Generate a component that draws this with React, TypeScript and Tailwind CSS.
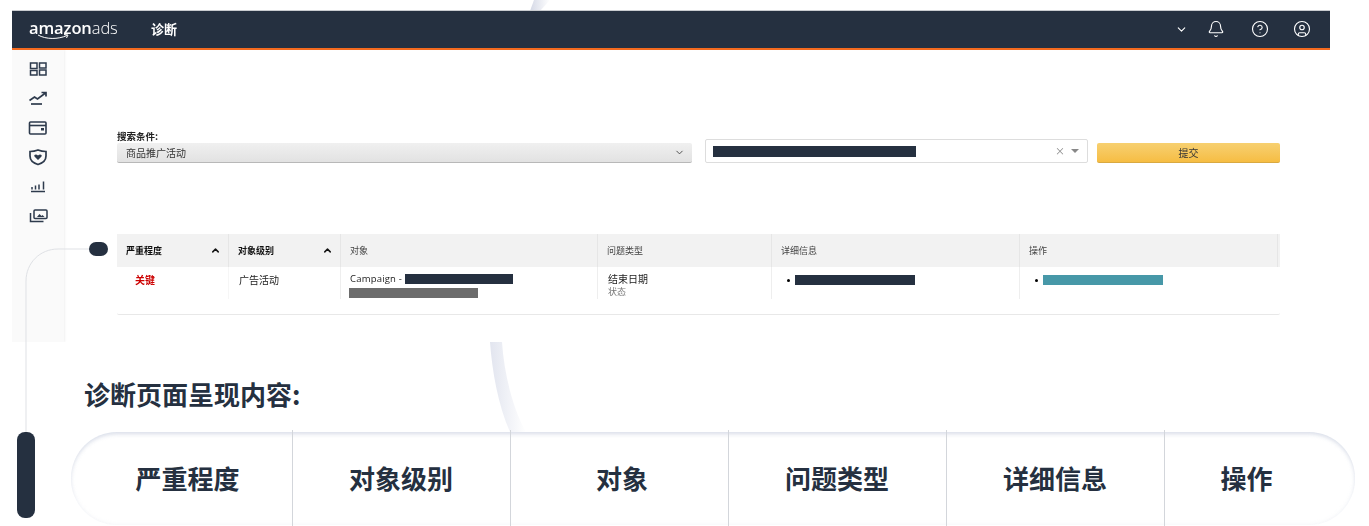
import { Bell, ChevronDown, ChevronUp, CircleHelp, CircleUser } from 'lucide-react'

const FONT = "font-['Noto_Sans_CJK_SC','Noto_Sans',sans-serif]"

const SUMMARY = [
  { label: '严重程度', cls: 'w-[221px] pl-[12px]' },
  { label: '对象级别', cls: 'w-[218px]' },
  { label: '对象', cls: 'w-[218px] pl-[6px]' },
  { label: '问题类型', cls: 'w-[218px]' },
  { label: '详细信息', cls: 'w-[218px]' },
  { label: '操作', cls: 'flex-1 pr-[26px]' },
]

function SideIcons() {
  const cls = 'w-[20px] h-[20px] text-[#2d3a4c]'
  return (
    <div className="flex flex-col items-center gap-[9.4px] pt-[9px]">
      <svg viewBox="0 0 20 20" fill="none" stroke="currentColor" strokeWidth="1.5" className={cls}>
        <rect x="2.500" y="4" width="6.500" height="5.500" />
        <rect x="2.500" y="11.500" width="6.500" height="4.500" />
        <rect x="11.500" y="4" width="6.500" height="5" />
        <rect x="11.500" y="11" width="6.500" height="5" />
      </svg>
      <svg viewBox="0 0 20 20" fill="none" stroke="currentColor" strokeWidth="1.700" className={cls}>
        <path d="M1.500 12.500l5-3.500 3 2 8-6M13.500 4.500h4.500v4" />
        <path d="M3 16h11" />
      </svg>
      <svg viewBox="0 0 20 20" fill="none" stroke="currentColor" strokeWidth="1.600" className={cls}>
        <rect x="1.500" y="4" width="16.500" height="12" rx="1" />
        <path d="M1.500 7.500h16.500" />
        <rect x="13" y="10" width="3" height="2.500" fill="currentColor" stroke="none" />
      </svg>
      <svg viewBox="0 0 20 20" fill="none" stroke="currentColor" strokeWidth="1.700" className={cls}>
        <path d="M2 4.500c3 0 5.500-.5 8-1.500 2.500 1 5 1.500 8 1.500v4.500c0 4-3 7-8 8.500-5-1.500-8-4.500-8-8.500z" />
        <path d="M10 13L6.500 9.500c-1-1.500 1.500-3 3.500-1 2-2 4.500-.5 3.500 1z" fill="currentColor" stroke="none" />
      </svg>
      <svg viewBox="0 0 20 20" fill="none" stroke="currentColor" strokeWidth="1.500" className={cls}>
        <path d="M4 12.500v-2.500M7.500 12.500v-4M11 12.500v-5M15.500 12.500v-8M3 14.500h14" />
      </svg>
      <svg viewBox="0 0 20 20" fill="none" stroke="currentColor" strokeWidth="1.500" className={cls}>
        <rect x="6" y="4" width="13" height="8.500" rx="1" />
        <path d="M2.500 7v8.500h13" />
        <path d="M9 11l2.500-3 2 2 1-1 2 2z" fill="currentColor" stroke="none" />
      </svg>
    </div>
  )
}

function Bar({ className }: { className: string }) {
  return <span className={`block h-[10px] ${className}`} />
}

function HeaderCell({ label, sort, dark }: { label: string; sort?: boolean; dark?: boolean }) {
  return (
    <div className={`flex items-center justify-between border-r border-[#e6e6e6] pl-[9px] pr-[7px] text-[9px] ${dark ? 'font-bold text-[#111]' : 'text-[#444]'}`}>
      <span>{label}</span>
      {sort && <ChevronUp size={11} strokeWidth={3.2} className="text-[#111]" />}
    </div>
  )
}

export default function App() {
  return (
    <div className={`relative w-[1369px] h-[526px] overflow-hidden bg-white ${FONT}`}>
      {/* background swooshes */}
      <svg className="absolute left-[480px] top-0 w-[80px] h-[12px]" viewBox="0 0 80 12">
        <defs>
          <linearGradient id="swooshTop" x1="0" x2="1" y1="0" y2="0">
            <stop offset="0" stopColor="#d5d9e6" />
            <stop offset="1" stopColor="#ffffff" />
          </linearGradient>
        </defs>
        <path d="M54 0h16l-10 11h-10z" fill="url(#swooshTop)" />
      </svg>
      <svg className="absolute left-[480px] top-[340px] w-[60px] h-[94px]" viewBox="0 0 60 94">
        <defs>
          <linearGradient id="swooshMid" x1="0" x2="1" y1="0" y2="0">
            <stop offset="0" stopColor="#e2e5ef" />
            <stop offset="1" stopColor="#ffffff" />
          </linearGradient>
        </defs>
        <path d="M10 2h12c2 30 10 65 24 90H30C18 65 12 30 10 2z" fill="url(#swooshMid)" />
      </svg>

      {/* app screenshot */}
      <div className="relative ml-[12px] mt-[10px] w-[1318px] h-[332px] bg-white blur-[0.35px]">
        <div className="flex items-center h-[38px] border-t border-[#c9ccd0] bg-[#253040] pl-[17px] text-white">
          <span className="relative w-[122px] pb-[2px] font-['Open_Sans',sans-serif] text-[16.500px] leading-none tracking-[-0.1px]">
            <span className="font-semibold">amazon</span>
            <span className="font-light">ads</span>
            <svg className="absolute left-[9px] top-[14px] w-[32px] h-[6px]" viewBox="0 0 32 6" fill="none" stroke="white" strokeWidth="1">
              <path d="M0 1c8 4.500 20 4.500 29 .5M26 .5l4 .5-1.500 3" />
            </svg>
          </span>
          <span className="pb-[2px] text-[13px] font-bold">诊断</span>
          <div className="ml-auto flex items-center pb-[1px] pr-[19px]">
            <ChevronDown size={13} strokeWidth={2} className="mr-[19px] text-white" />
            <Bell size={18} strokeWidth={1.500} className="mr-[26px]" />
            <CircleHelp size={18} strokeWidth={1.500} className="mr-[24px]" />
            <CircleUser size={18} strokeWidth={1.500} />
          </div>
        </div>
        <div className="h-[2px] bg-[#f46a1f]" />

        <div className="flex h-[292px] overflow-hidden">
          <div className="w-[52px] shrink-0 bg-[#fafafa] shadow-[1px_0_2px_rgba(0,0,0,0.06)]">
            <SideIcons />
          </div>

          <div className="flex-1 pl-[53px] pr-[50px]">
            <div className="pt-[81px]">
              <div className="flex items-end">
                <div className="w-[575px]">
                  <div className="text-[9.500px] leading-[11px] font-bold text-[#222]">搜索条件:</div>
                  <div className="mt-[1px] flex h-[20px] items-center justify-between rounded-[2px] border-b border-[#b8b8b8] bg-gradient-to-b from-[#f0f0f0] to-[#e2e2e2] pl-[9px] pr-[7px] text-[10px] text-[#333]">
                    <span>商品推广活动</span>
                    <ChevronDown size={11} strokeWidth={2} className="text-[#444]" />
                  </div>
                </div>
                <div className="ml-[13px] flex h-[24px] w-[383px] items-center rounded-[2px] border border-[#ddd] bg-white pl-[7px] pr-[8px]">
                  <Bar className="w-[203px] !h-[11px] bg-[#253040]" />
                  <span className="ml-auto text-[10px] leading-none text-[#888]">×</span>
                  <span className="ml-[6px] h-0 w-0 border-x-[4px] border-t-[4px] border-x-transparent border-t-[#888]" />
                </div>
                <button className="ml-[9px] h-[20px] w-[183px] rounded-[2px] border-b border-[#d9a941] bg-gradient-to-b from-[#f7d070] to-[#f6bd42] text-[10px] text-[#333]">
                  提交
                </button>
              </div>
            </div>

            <div className="mt-[71px] h-[81px] rounded-b-[2px] border-b border-[#e8e8e8]">
              <div className="grid h-[33px] grid-cols-[112px_112px_257px_174px_248px_258px] bg-[#f2f2f2]">
                <HeaderCell label="严重程度" sort dark />
                <HeaderCell label="对象级别" sort dark />
                <HeaderCell label="对象" />
                <HeaderCell label="问题类型" />
                <HeaderCell label="详细信息" />
                <HeaderCell label="操作" />
              </div>
              <div className="grid h-[32px] grid-cols-[112px_112px_257px_174px_248px_258px] text-[10px] text-[#222]">
                <div className="border-r border-[#f6f6f6] pl-[18px] pt-[5px] font-bold text-[#cc0000]">关键</div>
                <div className="border-r border-[#eee] pl-[10px] pt-[5px]">广告活动</div>
                <div className="border-r border-[#eee] pl-[9px] pt-[5px]">
                  <div className="flex items-center leading-[14px]">
                    <span className="font-['Open_Sans',sans-serif] text-[9.500px] tracking-[0.2px]">Campaign -&nbsp;</span>
                    <Bar className="w-[108px] bg-[#253040]" />
                  </div>
                  <Bar className="-ml-[1px] mt-[2px] w-[129px] bg-[#6c6c6c]" />
                </div>
                <div className="border-r border-[#eee] pl-[10px] pt-[5px] leading-[13px]">
                  <div>结束日期</div>
                  <div className="text-[9px] text-[#777]">状态</div>
                </div>
                <div className="flex items-start border-r border-[#eee] pl-[15px] pt-[8px]">
                  <span className="mr-[5px] mt-[4px] h-[3px] w-[3px] rounded-full bg-black" />
                  <Bar className="w-[120px] bg-[#253040]" />
                </div>
                <div className="flex items-start pl-[15px] pt-[8px]">
                  <span className="mr-[5px] mt-[4px] h-[3px] w-[3px] rounded-full bg-black" />
                  <Bar className="w-[120px] bg-[#4798a8]" />
                </div>
              </div>
            </div>
          </div>
        </div>
      </div>

      {/* timeline */}
      <svg className="absolute left-0 top-[240px] w-[110px] h-[200px]" viewBox="0 0 110 200" fill="none">
        <path d="M90 9H58C40 9 26 23 26 41v152" stroke="#dfe1e5" strokeWidth="1" />
      </svg>
      <span className="absolute left-[89px] top-[242px] h-[14px] w-[19px] rounded-full bg-[#253040]" />
      <span className="absolute left-[17px] top-[432px] h-[86px] w-[18px] rounded-[8px] bg-[#253040]" />

      <h2 className="absolute left-[84px] top-[376px] text-[26px] leading-[36px] font-bold text-[#253040]">诊断页面呈现内容:</h2>

      <div className="absolute left-[71px] top-[432px] flex h-[93px] w-[1284px] rounded-[46px] bg-white shadow-[inset_0_3px_4px_-1px_rgba(170,180,205,0.4),inset_0_0_4px_rgba(200,206,225,0.25)]">
        {SUMMARY.map((s, i) => (
          <div key={s.label} className={`relative flex items-center justify-center pb-[2px] text-[26px] font-bold text-[#253040] ${s.cls}`}>
            {s.label}
            {i < 5 && <span className="absolute left-full top-[-2px] h-[96px] w-px bg-[#d3d6db]" />}
          </div>
        ))}
      </div>
    </div>
  )
}
